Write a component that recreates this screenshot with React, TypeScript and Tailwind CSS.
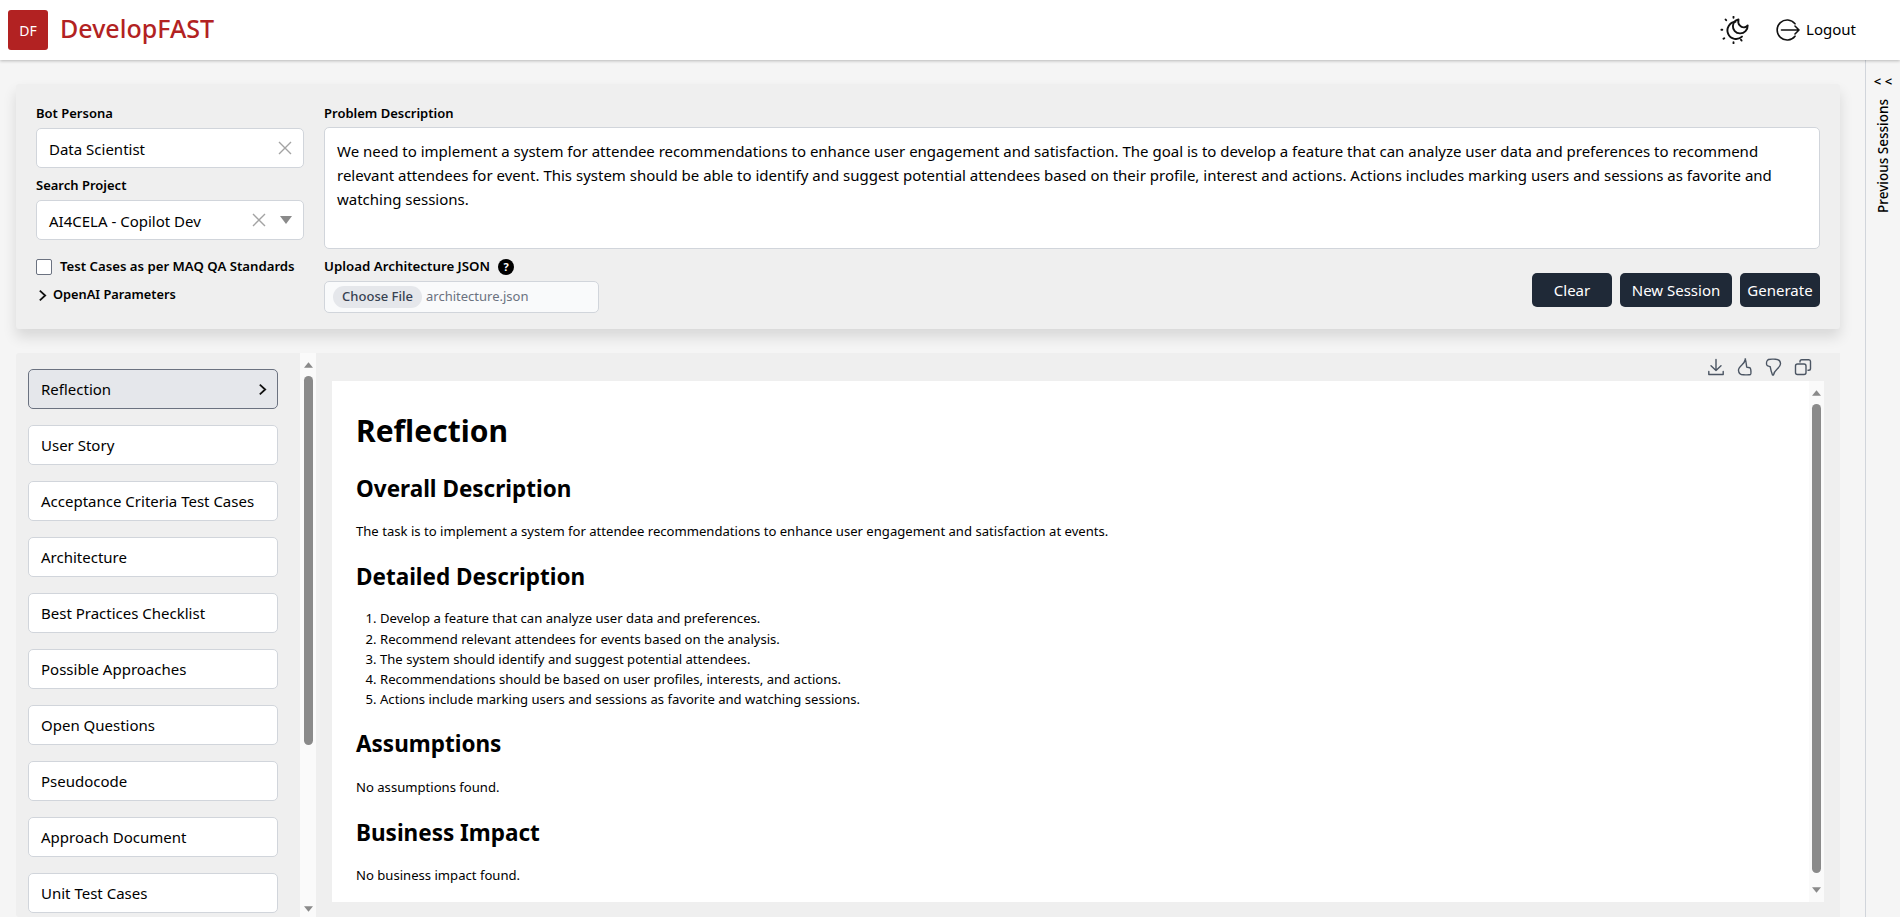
import React from "react";

const sections = [
  "Reflection",
  "User Story",
  "Acceptance Criteria Test Cases",
  "Architecture",
  "Best Practices Checklist",
  "Possible Approaches",
  "Open Questions",
  "Pseudocode",
  "Approach Document",
  "Unit Test Cases",
];

function X({ className }: { className?: string }) {
  return (
    <svg viewBox="0 0 14 14" className={className} fill="none" stroke="#a3a3a3" strokeWidth="1.4">
      <path d="M1 1l12 12M13 1L1 13" />
    </svg>
  );
}

function MoonSun() {
  return (
    <svg viewBox="0 0 30 28" className="w-[30px] h-[28px]" fill="none" stroke="#111" strokeWidth="1.9" strokeLinecap="round" strokeLinejoin="round">
      <path d="M15.500 5.800A8.600 8.600 0 1 0 22 20.600" />
      <path d="M18.500 3.400c-1.200 4.800 2.400 8.800 6.400 7.800 1-.2 2-.9 2.800-1.800.2 4.400-3.400 8.200-7.800 8-4.200-.2-7.200-3.600-7-7.400.2-3.200 2.400-5.800 5.600-6.600z" />
      <path d="M13.500 .8v.9M5.600 3.500l.6.8M1.400 13.800h.9M3.500 22.800l.8-.6M13.500 26.300v.9M21.500 24.600l-.5-.8" />
    </svg>
  );
}

function LogoutIcon() {
  return (
    <svg viewBox="0 0 24 24" className="w-[24px] h-[24px]" fill="none" stroke="#111" strokeWidth="1.6" strokeLinecap="round" strokeLinejoin="round">
      <path d="M19 5.800A10 10 0 1 0 19 18.200" />
      <path d="M5.500 12h17.500M19 8l4 4-4 4" />
    </svg>
  );
}

function ToolIcons() {
  return (
    <div className="h-7 flex items-center justify-end gap-[9px] pr-[27px]">
      <svg viewBox="0 0 20 20" className="w-[20px] h-[20px]" fill="none" stroke="#4b5563" strokeWidth="1.4" strokeLinecap="round" strokeLinejoin="round">
        <path d="M10 2.500v11M5 8.800l5 4.700 5-4.700M2.800 14.500v3h14.400v-3" />
      </svg>
      <svg viewBox="0 0 20 20" className="w-[20px] h-[20px]" fill="none" stroke="#4b5563" strokeWidth="1.4" strokeLinecap="round" strokeLinejoin="round">
        <path d="M10.500 2c-.6 2.800-2 4.400-3.700 6-1.800 1.600-3.500 3.300-3.300 5.500.2 2.500 2.300 4.300 5 4.300 2.300 0 5.500.3 7-.3.800-.5.500-5.600-.3-6.500-.6-.6-2.200-.3-3.500-.8-.4-2.500-.5-5.800-1.500-8.200z" />
      </svg>
      <svg viewBox="0 0 20 20" className="w-[20px] h-[20px]" fill="none" stroke="#4b5563" strokeWidth="1.4" strokeLinecap="round" strokeLinejoin="round">
        <path d="M9.500 18c.5-2.800 2-4.500 3.700-6 1.800-1.600 3.500-3.300 3.300-5.500-.2-2.500-2.300-4.300-5-4.300-2.300 0-5.500-.3-7 .3-1.500.6-2.300 3.200-1.800 5.200.4 1.400 2 1.500 3.500 2 .4 2.500 1.300 5.800 2.300 8.300z" />
      </svg>
      <svg viewBox="0 0 20 20" className="w-[20px] h-[20px]" fill="none" stroke="#4b5563" strokeWidth="1.4" strokeLinecap="round" strokeLinejoin="round">
        <rect x="2.500" y="7" width="10.500" height="10.500" rx="2" />
        <path d="M7 5V4.500A1.800 1.800 0 0 1 8.800 2.700h7A1.800 1.800 0 0 1 17.500 4.500v7a1.800 1.800 0 0 1-1.800 1.800H15" />
      </svg>
    </div>
  );
}

function ScrollBar({ trackClass, thumbClass, width }: { trackClass: string; thumbClass: string; width: string }) {
  return (
    <div className={`${width} ${trackClass} flex flex-col items-center shrink-0`}>
      <svg viewBox="0 0 10 6" className="w-[9px] h-[6px] mt-[9px] shrink-0" fill="#8a8a8a"><path d="M5 0l5 6H0z" /></svg>
      <div className={thumbClass} />
      <svg viewBox="0 0 10 6" className="w-[9px] h-[6px] shrink-0" fill="#8a8a8a"><path d="M0 0h10L5 6z" /></svg>
    </div>
  );
}

export default function App() {
  return (
    <div className="h-screen w-full overflow-hidden flex flex-col bg-[#f5f5f5] text-black font-['Noto_Sans','Open_Sans',sans-serif]">
      <header className="h-[60px] shrink-0 bg-white shadow-[0_1px_3px_rgba(0,0,0,0.25)] z-10 flex items-center pl-2 pr-[44px]">
        <div className="w-10 h-10 rounded-[3px] bg-[#b22222] text-white text-[14px] flex items-center justify-center">DF</div>
        <div className="ml-3 pb-[2px] text-[25px] font-medium text-[#b22222]">DevelopFAST</div>
        <div className="ml-auto flex items-center">
          <MoonSun />
          <div className="ml-[26px]"><LogoutIcon /></div>
          <span className="ml-[6px] pb-[2px] text-[15px]">Logout</span>
        </div>
      </header>

      <div className="flex-1 min-h-0 flex">
        <main className="flex-1 min-w-0 pl-4 pr-[25px] pt-6 flex flex-col">
          <section className="h-[245px] shrink-0 bg-[#efefef] rounded-[3px] shadow-[0_8px_14px_rgba(0,0,0,0.12)] pl-5 pr-5 flex gap-[20px]">
            <div className="w-[268px] shrink-0 pt-[20px]">
              <div className="text-[13px] font-semibold leading-[18px]">Bot Persona</div>
              <div className="mt-[6px] h-[40px] bg-white border border-[#d1d5db] rounded-[5px] flex items-center pl-[12px] pr-[11px] text-[15px]">
                <span className="pt-[2px]">Data Scientist</span>
                <X className="w-[14px] h-[14px] ml-auto" />
              </div>
              <div className="mt-[8px] text-[13px] font-semibold leading-[18px]">Search Project</div>
              <div className="mt-[6px] h-[40px] bg-white border border-[#d1d5db] rounded-[5px] flex items-center pl-[12px] pr-[11px] text-[15px]">
                <span className="pt-[2px]">AI4CELA - Copilot Dev</span>
                <X className="w-[14px] h-[14px] ml-auto" />
                <svg viewBox="0 0 12 8" className="w-[12px] h-[8px] ml-[14px]" fill="#8a8a8a"><path d="M0 0h12L6 8z" /></svg>
              </div>
              <div className="mt-[19px] flex items-center h-[16px]">
                <div className="w-4 h-4 bg-white border border-[#6b7280] rounded-[2px]" />
                <span className="ml-2 text-[13.200px] font-semibold whitespace-nowrap">Test Cases as per MAQ QA Standards</span>
              </div>
              <div className="mt-[12px] flex items-center h-[16px]">
                <svg viewBox="0 0 10 14" className="w-[9px] h-[13px] ml-[2px]" fill="none" stroke="#111" strokeWidth="2"><path d="M2 1.500L8 7l-6 5.500" /></svg>
                <span className="ml-[6px] text-[12.800px] font-semibold">OpenAI Parameters</span>
              </div>
            </div>

            <div className="flex-1 min-w-0 pt-[20px] flex flex-col">
              <div className="text-[13px] font-semibold leading-[18px]">Problem Description</div>
              <div className="mt-[5px] h-[122px] bg-white border border-[#d1d5db] rounded-[5px] pl-[12px] pr-[24px] pt-[11px] text-[15px] leading-[24px]">
                We need to implement a system for attendee recommendations to enhance user engagement and satisfaction. The goal is to develop a feature that can analyze user data and preferences to recommend relevant attendees for event. This system should be able to identify and suggest potential attendees based on their profile, interest and actions. Actions includes marking users and sessions as favorite and watching sessions.
              </div>
              <div className="flex justify-between">
                <div>
                  <div className="mt-[9px] flex items-center h-[18px]">
                    <span className="text-[13.300px] font-semibold">Upload Architecture JSON</span>
                    <span className="ml-[8px] w-4 h-4 rounded-full bg-black text-white text-[11px] font-bold flex items-center justify-center">?</span>
                  </div>
                  <div className="mt-[5px] w-[275px] h-[32px] bg-[#f9fafb] border border-[#d1d5db] rounded-[5px] flex items-center pl-[8px]">
                    <span className="h-[22px] w-[89px] rounded-full bg-[#e5e7eb] text-[#374151] text-[13px] font-medium flex items-center justify-center">Choose File</span>
                    <span className="ml-[4px] text-[13px] text-[#6b7280]">architecture.json</span>
                  </div>
                </div>
                <div className="mt-[24px] flex gap-2 text-white text-[15px]">
                  <button className="w-[80px] h-[34px] rounded-[5px] bg-[#1f2937]">Clear</button>
                  <button className="w-[112px] h-[34px] rounded-[5px] bg-[#1f2937]">New Session</button>
                  <button className="w-[80px] h-[34px] rounded-[5px] bg-[#1f2937]">Generate</button>
                </div>
              </div>
            </div>
          </section>

          <div className="flex-1 min-h-0 mt-[24px] flex">
            <nav className="w-[284px] shrink-0 bg-[#efefef] rounded-l-[3px] pl-3 pr-[22px] pt-4 flex flex-col gap-4 overflow-hidden">
              {sections.map((s, i) => (
                <div
                  key={s}
                  className={
                    i === 0
                      ? "h-[40px] shrink-0 rounded-[5px] border border-[#6b7280] bg-[#e5e7eb] flex items-center pl-[12px] pr-[10px] text-[15px] whitespace-nowrap"
                      : "h-[40px] shrink-0 rounded-[5px] border border-[#d1d5db] bg-white flex items-center pl-[12px] pr-[10px] text-[15px] whitespace-nowrap"
                  }
                >
                  <span>{s}</span>
                  {i === 0 && (
                    <svg viewBox="0 0 10 14" className="w-[9px] h-[13px] ml-auto" fill="none" stroke="#111" strokeWidth="2"><path d="M2 1.500L8 7l-6 5.500" /></svg>
                  )}
                </div>
              ))}
            </nav>
            <ScrollBar width="w-[16px]" trackClass="bg-[#fafafa] pb-[5px]" thumbClass="w-[9px] mt-[8px] mb-[161px] flex-1 rounded-full bg-[#8a8a8a]" />
            <div className="flex-1 min-w-0 bg-[#efefef] flex flex-col">
              <ToolIcons />
              <article className="h-[521px] ml-4 mr-4 bg-white flex">
                <div className="flex-1 min-w-0 pl-6 pt-[28px]">
                  <h1 className="text-[30px] font-bold leading-[44px]">Reflection</h1>
                  <h2 className="mt-[20px] text-[22.500px] font-bold leading-[32px]">Overall Description</h2>
                  <p className="mt-[16px] text-[13.100px] leading-[20.250px]">The task is to implement a system for attendee recommendations to enhance user engagement and satisfaction at events.</p>
                  <h2 className="mt-[20px] text-[22.500px] font-bold leading-[32px]">Detailed Description</h2>
                  <ol className="mt-[15px] text-[13.100px] leading-[20.250px] list-decimal pl-[24px]">
                    <li>Develop a feature that can analyze user data and preferences.</li>
                    <li>Recommend relevant attendees for events based on the analysis.</li>
                    <li>The system should identify and suggest potential attendees.</li>
                    <li>Recommendations should be based on user profiles, interests, and actions.</li>
                    <li>Actions include marking users and sessions as favorite and watching sessions.</li>
                  </ol>
                  <h2 className="mt-[18px] text-[22.500px] font-bold leading-[32px]">Assumptions</h2>
                  <p className="mt-[17px] text-[13.100px] leading-[20.250px]">No assumptions found.</p>
                  <h2 className="mt-[20px] text-[22.500px] font-bold leading-[32px]">Business Impact</h2>
                  <p className="mt-[16px] text-[13.100px] leading-[20.250px]">No business impact found.</p>
                </div>
                <ScrollBar width="w-[15px]" trackClass="bg-[#fafafa] pb-[9px]" thumbClass="w-[9px] mt-[8px] mb-[14px] flex-1 rounded-full bg-[#8a8a8a]" />
              </article>
            </div>
          </div>
        </main>

        <aside className="w-[35px] shrink-0 border-l border-[#d1d5db] flex flex-col items-center pt-[12px]">
          <div className="text-[13px] font-semibold leading-[18px] whitespace-nowrap">&lt; &lt;</div>
          <div className="mt-[9px] text-[13.500px] font-medium whitespace-nowrap [writing-mode:vertical-rl] rotate-180">Previous Sessions</div>
        </aside>
      </div>
    </div>
  );
}
